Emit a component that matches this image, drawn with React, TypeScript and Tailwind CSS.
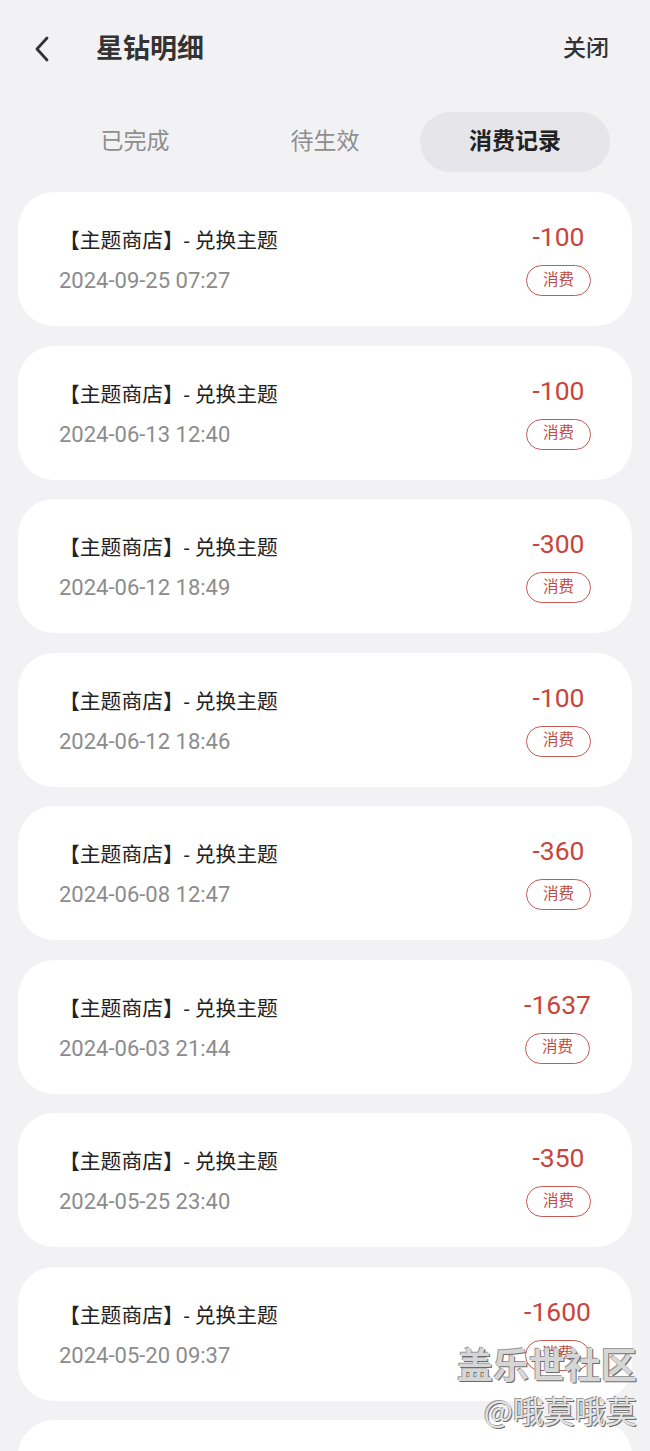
import React from "react";

const records = [
  { time: "2024-09-25 07:27", amount: -100 },
  { time: "2024-06-13 12:40", amount: -100 },
  { time: "2024-06-12 18:49", amount: -300 },
  { time: "2024-06-12 18:46", amount: -100 },
  { time: "2024-06-08 12:47", amount: -360 },
  { time: "2024-06-03 21:44", amount: -1637 },
  { time: "2024-05-25 23:40", amount: -350 },
  { time: "2024-05-20 09:37", amount: -1600 },
  { time: "2024-05-18 10:12", amount: -100 },
];

const tabs = ["已完成", "待生效", "消费记录"];

const font = "font-['Roboto','Noto_Sans_CJK_SC',sans-serif]";

const RecordCard = ({ time, amount }: { time: string; amount: number }) => (
  <div className="flex h-[134px] shrink-0 items-center justify-between rounded-[36px] bg-white pl-[41px] pr-[41px]">
    <div className="flex flex-col gap-[12px] pt-[4px]">
      <div className="text-[20.8px] leading-[28px] text-[#222]">【主题商店】- 兑换主题</div>
      <div className="text-[22px] leading-[28px] text-[#8c8c8c]">{time}</div>
    </div>
    <div className="flex flex-col items-center gap-[13px]">
      <div className="text-[26.5px] leading-[30px] text-[#c8453d]">{amount}</div>
      <div className="flex h-[31px] items-center rounded-full border-[1.6px] border-[#c65a52] px-[16px] text-[15.5px] text-[#c04b43]">
        消费
      </div>
    </div>
  </div>
);

export default function App() {
  return (
    <div className={`relative h-[1451px] overflow-hidden bg-[#f2f2f5] ${font}`}>
      <header className="flex h-[98px] items-center justify-between pl-[32px] pr-[41px]">
        <div className="flex items-center gap-[42px]">
          <svg width="22" height="28" viewBox="0 0 22 28" fill="none">
            <polyline
              points="15,3 5,14 15,25"
              stroke="#333"
              strokeWidth="2.8"
              strokeLinecap="round"
              strokeLinejoin="round"
            />
          </svg>
          <h1 className="text-[27px] font-semibold text-[#333]">星钻明细</h1>
        </div>
        <button className="text-[23px] font-medium text-[#333]">关闭</button>
      </header>

      <div className="mt-[14px] grid grid-cols-3 px-[40px]">
        {tabs.map((t, i) => (
          <div
            key={t}
            className={
              i === 2
                ? "flex h-[60px] items-center justify-center rounded-full bg-[#e5e5ea] text-[23px] font-bold text-[#222]"
                : "flex h-[60px] items-center justify-center text-[23px] text-[#8e8e8e]"
            }
          >
            {t}
          </div>
        ))}
      </div>

      <div className="mt-[20px] flex flex-col gap-[19.5px] px-[18px]">
        {records.map((r, i) => (
          <RecordCard key={i} time={r.time} amount={r.amount} />
        ))}
      </div>

      {/* watermark */}
      <div className="absolute right-[13px] top-[1340px] flex flex-col items-end font-['Noto_Sans_CJK_SC',sans-serif]">
        <div className="text-[36px] font-bold leading-[46px] text-[#d6d6d6] [text-shadow:1px_1px_0_#6b6b6b,-1px_-1px_0_#9a9a9a]">
          盖乐世社区
        </div>
        <div className="mt-[4px] text-[31px] leading-[40px] text-[#e4e4e4] [text-shadow:1px_1px_0_#6b6b6b,-1px_-1px_0_#9a9a9a]">
          @哦莫哦莫
        </div>
      </div>
    </div>
  );
}
